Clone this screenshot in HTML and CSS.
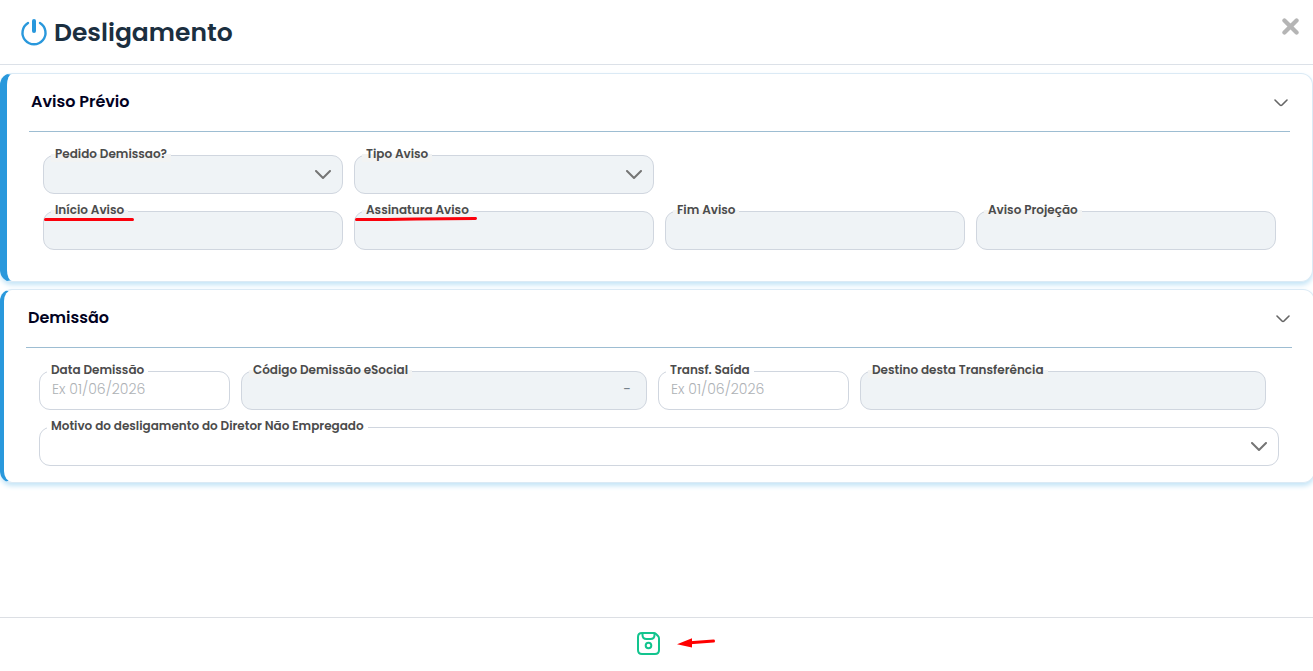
FILE: index.html
```html
<!DOCTYPE html>
<html lang="pt-BR">
<head>
<meta charset="utf-8">
<title>Desligamento</title>
<link rel="stylesheet" href="styles.css">
</head>
<body>
<div class="dialog">
  <header class="dialog-header">
    <svg class="power" viewBox="0 0 28 28" aria-hidden="true"><path d="M8 5A11.500 11.500 0 1 0 20 5" stroke-width="2.4"/><path d="M14 3V13" stroke-width="4"/></svg>
    <h1 class="title">Desligamento</h1>
    <button class="close" type="button" aria-label="Fechar"><svg viewBox="0 0 16 16"><path d="M2.3 2.3L13.7 13.7M13.7 2.3L2.3 13.7"/></svg></button>
  </header>
  <main class="content">
    <section class="card card-notice">
      <div class="card-header">
        <h2 class="card-title">Aviso Prévio</h2>
        <button class="toggle" type="button" aria-label="Recolher Aviso Prévio"><svg viewBox="0 0 14 8"><path d="M1 1L6 6Q7 7 8 6L13 1"/></svg></button>
      </div>
      <div class="fields fields-notice">
        <div class="field">
          <select id="pedido" class="control" disabled></select>
          <label class="label" for="pedido">Pedido Demissao?</label>
          <svg class="chevron" viewBox="0 0 16 10"><path d="M1 1L8 8L15 1"/></svg>
        </div>
        <div class="field">
          <select id="tipo" class="control" disabled></select>
          <label class="label" for="tipo">Tipo Aviso</label>
          <svg class="chevron" viewBox="0 0 16 10"><path d="M1 1L8 8L15 1"/></svg>
        </div>
        <div class="field row-start">
          <input id="inicio" class="control" type="text" disabled>
          <label class="label" for="inicio">Início Aviso</label>
          <svg class="underline underline-short" viewBox="0 0 90 6"><path d="M1.5 3.500H88.5"/></svg>
        </div>
        <div class="field">
          <input id="assinatura" class="control" type="text" disabled>
          <label class="label" for="assinatura">Assinatura Aviso</label>
          <svg class="underline underline-long" viewBox="0 0 122 6"><path d="M1.5 3.500H31L61 3L120.5 2.500"/></svg>
        </div>
        <div class="field">
          <input id="fim" class="control" type="text" disabled>
          <label class="label" for="fim">Fim Aviso</label>
        </div>
        <div class="field">
          <input id="projecao" class="control" type="text" disabled>
          <label class="label" for="projecao">Aviso Projeção</label>
        </div>
      </div>
    </section>
    <section class="card card-dismissal">
      <div class="card-header">
        <h2 class="card-title">Demissão</h2>
        <button class="toggle" type="button" aria-label="Recolher Demissão"><svg viewBox="0 0 14 8"><path d="M1 1L6 6Q7 7 8 6L13 1"/></svg></button>
      </div>
      <div class="fields fields-dismissal">
        <div class="field">
          <input id="data" class="control" type="text" placeholder="Ex 01/06/2026">
          <label class="label" for="data">Data Demissão</label>
        </div>
        <div class="field">
          <input id="codigo" class="control code" type="text" value="-" disabled>
          <label class="label" for="codigo">Código Demissão eSocial</label>
        </div>
        <div class="field">
          <input id="transf" class="control" type="text" placeholder="Ex 01/06/2026">
          <label class="label" for="transf">Transf. Saída</label>
        </div>
        <div class="field">
          <input id="destino" class="control" type="text" disabled>
          <label class="label" for="destino">Destino desta Transferência</label>
        </div>
      </div>
      <div class="field field-reason">
        <select id="motivo" class="control"></select>
        <label class="label" for="motivo">Motivo do desligamento do Diretor Não Empregado</label>
        <svg class="chevron" viewBox="0 0 16 10"><path d="M1 1L8 8L15 1"/></svg>
      </div>
    </section>
  </main>
  <footer class="dialog-footer">
    <div class="save-area">
      <button class="save" type="button" aria-label="Salvar"><svg viewBox="0 0 23 23"><path d="M5 1H16.500Q18 1 19 2L21 4Q22 5 22 6.500V18Q22 22 18 22H5Q1 22 1 18V5Q1 1 5 1Z"/><path d="M5.500 1.500V3Q5.500 7 9.500 7H13.500Q17.500 7 17.500 3V1.500"/><circle cx="11.5" cy="13.5" r="2.8"/></svg></button>
      <svg class="arrow" viewBox="0 0 40 12"><path class="arrow-line" d="M13 5.700L36.500 4"/><path class="arrow-head" d="M0 7.200L15 1.200V10.500Z"/></svg>
    </div>
  </footer>
</div>
</body>
</html>
```

FILE: styles.css
```css
* { box-sizing: border-box; }
body { margin: 0; background: #fff; font-family: Poppins, Inter, sans-serif; }
svg { display: block; fill: none; stroke-linecap: round; stroke-linejoin: round; }
button { display: block; padding: 0; border: 0; background: none; cursor: pointer; }
.dialog { display: flex; flex-direction: column; min-height: 100vh; }
.dialog-header { display: flex; align-items: center; height: 65px; padding: 0 14px 0 20px; border-bottom: 1px solid #dce1e8; }
.power { width: 28px; height: 28px; stroke: #2998dc; }
.title { margin: 0 auto 0 6px; padding-top: 1px; color: #1b2f40; font-size: 25px; line-height: 32px; font-weight: 600; }
.close { align-self: flex-start; margin-top: 18px; }
.close svg { width: 17px; height: 17px; stroke: #b5b5b5; stroke-width: 4; }
.content { flex: 1; display: flex; flex-direction: column; gap: 7px; padding-top: 8px; overflow: hidden; }
.card { border: 1px solid #dbeaf5; border-left: 7px solid #2998dc; border-radius: 12px; box-shadow: 0 3px 5px #c5e5f7; background: #fff; }
.card-notice { padding: 0 22px 31px; }
.card-dismissal { margin-right: -2px; padding: 0 22px 16px; border-left-width: 4px; }
.card-header { display: flex; align-items: center; justify-content: space-between; height: 58px; padding: 0 2px; border-bottom: 1px solid #9dbdd2; }
.card-title { margin: 0; padding-bottom: 1px; color: #02021f; font-size: 16px; line-height: 24px; font-weight: 600; }
.toggle svg { width: 14px; height: 8px; stroke: #666; stroke-width: 1.6; }
.fields { display: grid; gap: 17px 11px; padding-top: 23px; }
.fields-notice { grid-template-columns: repeat(4, 1fr); margin: 0 14px; }
.fields-dismissal { grid-template-columns: 191fr 406fr 191fr 406fr; margin: 0 26px 0 13px; }
.row-start { grid-column-start: 1; }
.field { position: relative; min-width: 0; }
.field-reason { margin: 17px 13px 0; }
.control { display: block; width: 100%; height: 39px; padding: 0 12px 2px; border: 1px solid #d0d6df; border-radius: 11px; background: #fff; color: #444; font: 300 14px/20px Poppins, Inter, sans-serif; appearance: none; opacity: 1; }
.control:disabled { background: #eff3f6; color: #75828c; }
.control::placeholder { color: #adb1b5; opacity: 1; }
.code { padding-right: 15px; font-weight: 400; text-align: right; }
.label { position: absolute; left: 8px; top: -9px; padding: 0 4px; background: #fff; color: #4b4b4b; font-size: 12px; line-height: 16px; font-weight: 600; white-space: nowrap; }
.control:disabled + .label { background: linear-gradient(#fff 50%, #f2f3f3 50%); }
.chevron { position: absolute; right: 12px; top: 15px; width: 16px; height: 10px; stroke: #757575; stroke-width: 2; pointer-events: none; }
.underline { position: absolute; left: 1px; top: 5px; height: 6px; stroke: #fb000b; stroke-width: 3; }
.underline-short { width: 90px; }
.underline-long { width: 122px; }
.dialog-footer { display: flex; justify-content: center; height: 54px; padding-top: 14px; border-top: 1px solid #dcdfe4; }
.save-area { position: relative; margin-right: 16px; }
.save svg { width: 23px; height: 23px; stroke: #12c48e; stroke-width: 2; }
.arrow { position: absolute; left: 40px; top: 5px; width: 40px; height: 12px; }
.arrow-line { stroke: #f00; stroke-width: 3; }
.arrow-head { fill: #f00; }
```
